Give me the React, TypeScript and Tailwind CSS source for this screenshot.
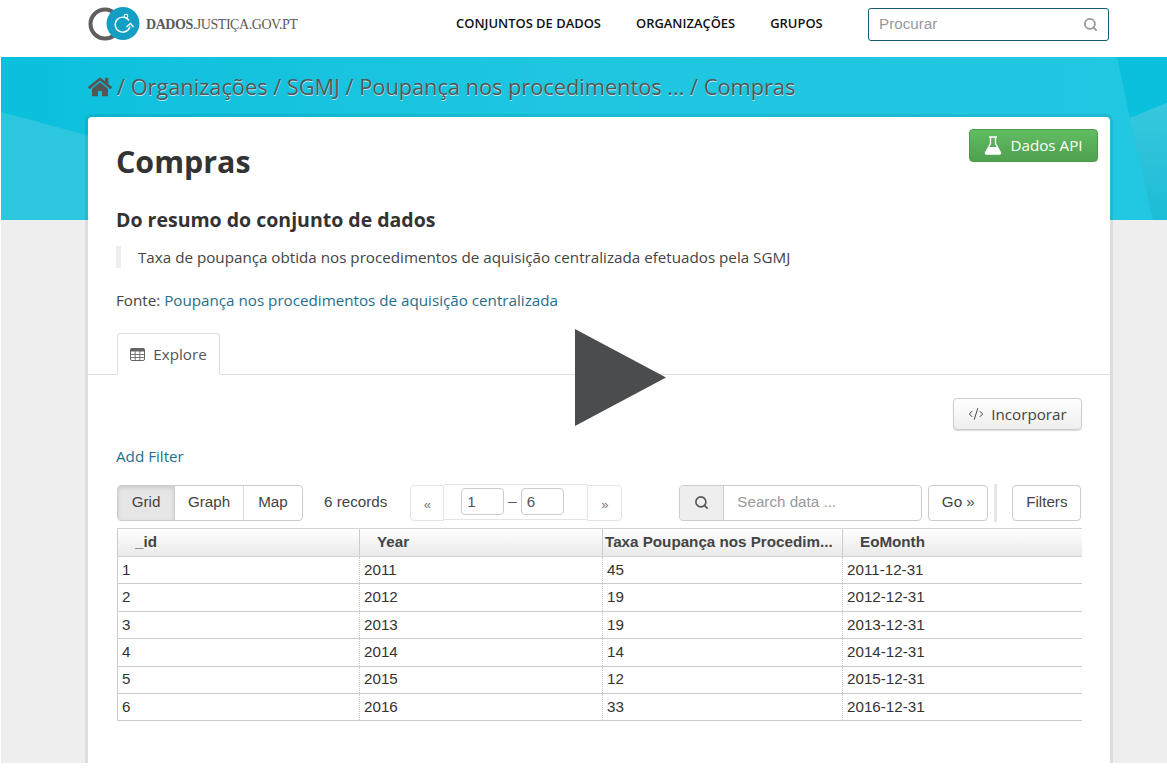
import { Search, CodeXml } from 'lucide-react';
import { FaHome } from 'react-icons/fa';

const rows = [
  ['1', '2011', '45', '2011-12-31'],
  ['2', '2012', '19', '2012-12-31'],
  ['3', '2013', '19', '2013-12-31'],
  ['4', '2014', '14', '2014-12-31'],
  ['5', '2015', '12', '2015-12-31'],
  ['6', '2016', '33', '2016-12-31'],
];

const openSans = "font-['Open_Sans',sans-serif]";
const helvetica = "font-['Liberation_Sans',sans-serif]";

function Logo() {
  return (
    <svg width="52" height="34" viewBox="0 0 52 34">
      <circle cx="17" cy="17" r="14.5" fill="none" stroke="#5f5f5f" strokeWidth="4" />
      <circle cx="35" cy="16.5" r="16.5" fill="#139fc4" />
      <path d="M41 13.5a7.5 7.5 0 1 0 1 6" fill="none" stroke="#fff" strokeWidth="1.4" />
      <circle cx="38" cy="9" r="1.8" fill="none" stroke="#fff" strokeWidth="1.1" />
      <path d="M38.5 20l4-3.5 3 3.5" fill="none" stroke="#fff" strokeWidth="1.4" />
    </svg>
  );
}

function Flask() {
  return (
    <svg width="18" height="19" viewBox="0 0 18 19">
      <path d="M5 1h8M6.5 1v6.500L1.500 16.500a1 1 0 0 0 1 1.500h13a1 1 0 0 0 1-1.500l-5-9V1" fill="none" stroke="#fff" strokeWidth="1.3" />
      <path d="M4.800 11h8.400l3.300 5.800a.8.8 0 0 1-.7 1.200H2.200a.8.8 0 0 1-.7-1.200z" fill="#fff" />
    </svg>
  );
}

function GridIcon() {
  return (
    <svg width="15" height="13" viewBox="0 0 15 13">
      <rect x="0.5" y="0.5" width="14" height="12" rx="1.5" fill="none" stroke="#666" />
      <rect x="0.5" y="0.5" width="14" height="3" fill="#666" />
      <path d="M5.200 3v9.500M9.800 3v9.500M1 6.500h13M1 9.500h13" stroke="#666" strokeWidth="0.9" />
    </svg>
  );
}

function Nav() {
  return (
    <header className="h-[57px] bg-white flex items-center pl-[88px]">
      <div className="flex items-center w-[368px] -mt-[9px]">
        <Logo />
        <span className="ml-[6px] text-[14px] tracking-[-0.45px] text-[#5a5a5a] font-['Liberation_Serif',serif]">
          <b>DADOS</b>.JUSTIÇA.GOV.PT
        </span>
      </div>
      <nav className={`flex gap-[35px] text-[12.95px] font-semibold text-[#111] -mt-[9px] w-[412px] ${openSans}`}>
        <span>CONJUNTOS DE DADOS</span>
        <span>ORGANIZAÇÕES</span>
        <span>GRUPOS</span>
      </nav>
      <div className="w-[241px] h-[33px] -mt-[9px] border border-[#1a5a72] rounded-[3px] flex items-center justify-between pl-[10px] pr-[10px]">
        <span className={`text-[15.2px] text-[#999] ${helvetica}`}>Procurar</span>
        <Search size={15} className="text-[#999]" strokeWidth={3} />
      </div>
    </header>
  );
}

function Banner() {
  return (
    <div className="relative h-[163px] overflow-hidden bg-gradient-to-r from-[#0ac0dd] via-[#1fc6e0] to-[#22c7e2] pl-[87px] pt-[14px]">
      <div className="absolute left-0 top-[55px] h-[110px] w-[90px] bg-[#2cc6df] [clip-path:polygon(0_0,100%_22%,100%_100%,0_100%)]" />
      <div className="absolute right-0 top-0 h-full w-[50px] bg-[#0ac0dd] [clip-path:polygon(0_0,100%_0,100%_46px,13px_61px)]" />
      <div className="absolute right-0 top-0 h-full w-[58px] bg-gradient-to-b from-[#3fcbe0] to-[#1bbcd6] [clip-path:polygon(21px_61px,100%_46px,100%_100%,44px_100%)]" />
      <div className={`relative flex items-center gap-[5px] text-[21.75px] text-[#555] [text-shadow:0_1px_0_rgba(255,255,255,0.7)] ${openSans}`}>
        <FaHome size={24} className="text-[#555]" />
        <span>/ Organizações / SGMJ / Poupança nos procedimentos ... / Compras</span>
      </div>
    </div>
  );
}

function Pager() {
  return (
    <div className="flex items-center ml-[23px] text-[#666]">
      <span className="w-[34px] h-[36px] mt-[1px] border border-[#e4e4e4] rounded-l-[4px] flex items-center justify-center text-[13px] text-[#777] pt-[4px]">«</span>
      <div className="h-[36px] -mt-[2px] w-[143px] border-y border-[#e4e4e4] flex items-center pl-[17px]">
        <span className="w-[43px] h-[27px] border border-[#ccc] rounded-[4px] pl-[5px] leading-[25px] text-[#555]">1</span>
        <span className="mx-[4px] text-[#555]">–</span>
        <span className="w-[43px] h-[27px] border border-[#ccc] rounded-[4px] pl-[5px] leading-[25px] text-[#555]">6</span>
      </div>
      <span className="w-[35px] h-[36px] mt-[1px] border border-[#e4e4e4] rounded-r-[4px] flex items-center justify-center text-[13px] text-[#777] pt-[4px]">»</span>
    </div>
  );
}

function Toolbar() {
  return (
    <div className={`flex items-center h-[37px] whitespace-nowrap text-[15.2px] text-[#444] ${helvetica}`}>
      <div className="flex h-[36px] border border-[#ccc] rounded-[4px] overflow-hidden">
        <span className="w-[57px] flex items-center justify-center bg-[#e6e6e6] shadow-[inset_0_2px_4px_rgba(0,0,0,0.12)] border-r border-[#ccc]">Grid</span>
        <span className="w-[69px] flex items-center justify-center border-r border-[#ddd]">Graph</span>
        <span className="w-[58px] flex items-center justify-center">Map</span>
      </div>
      <span className="ml-[21px]">6 records</span>
      <Pager />
      <div className="ml-[57px] flex h-[36px] w-[243px] border border-[#ccc] rounded-[4px] overflow-hidden">
        <span className="w-[44px] bg-[#eee] border-r border-[#ccc] flex items-center justify-center">
          <Search size={15} strokeWidth={2.6} className="text-[#555]" />
        </span>
        <span className="pl-[13px] flex items-center text-[#999]">Search data ...</span>
      </div>
      <span className="ml-[6px] w-[60px] h-[36px] border border-[#ccc] rounded-[4px] flex items-center justify-center">Go »</span>
      <span className="ml-[6px] w-[3px] h-[38px] bg-[#e6e6e6]" />
      <span className="ml-[15px] w-[69px] h-[36px] border border-[#ccc] rounded-[4px] flex items-center justify-center">Filters</span>
    </div>
  );
}

function DataGrid() {
  const cols = 'grid grid-cols-[242px_243px_240px_240px]';
  return (
    <div className={`mt-[7px] w-[965px] text-[15.2px] text-[#333] border-l border-[#ccc] ${helvetica}`}>
      <div className={`${cols} h-[29px] items-center font-bold text-[#444] border-y border-[#d4d4d4] bg-gradient-to-b from-white to-[#e9e9e9]`}>
        <span className="pl-[17px] h-full flex items-center border-r border-[#ccc]">_id</span>
        <span className="pl-[17px] h-full flex items-center border-r border-[#ccc]">Year</span>
        <span className="pl-[2px] h-full flex items-center border-r border-[#ccc] whitespace-nowrap overflow-hidden">Taxa Poupança nos Procedim...</span>
        <span className="pl-[17px] h-full flex items-center">EoMonth</span>
      </div>
      {rows.map((row) => (
        <div key={row[0]} className={`${cols} h-[27.4px] items-center border-b border-[#ccc]`}>
          {row.map((cell, i) => (
            <span key={i} className={`pl-[4px] h-full flex items-center ${i < 3 ? 'border-r border-dotted border-[#ccc]' : ''}`}>
              {cell}
            </span>
          ))}
        </div>
      ))}
    </div>
  );
}

function Card() {
  return (
    <section className={`relative z-10 -mt-[103px] ml-[88px] w-[1022px] h-[646px] bg-white rounded-t-[4px] shadow-[0_0_0_3px_rgba(0,0,0,0.07)] ${openSans}`}>
      <div className="px-[28px] pt-[25px]">
        <div className="flex justify-between items-start">
          <h1 className="text-[30.4px] leading-[40px] font-bold text-[#333]">Compras</h1>
          <button className="-mt-[13px] -mr-[16px] w-[129px] h-[33px] rounded-[4px] border border-[#4a9a4a] bg-gradient-to-b from-[#62bd62] to-[#4fa04f] text-white text-[15.2px] flex items-center justify-center gap-[8px]">
            <Flask />
            Dados API
          </button>
        </div>
        <h2 className="mt-[26px] text-[19.5px] leading-[24px] font-bold text-[#333]">Do resumo do conjunto de dados</h2>
        <p className="mt-[14px] border-l-[5px] border-[#eee] pl-[17px] text-[15.2px] leading-[22px] text-[#444]">
          Taxa de poupança obtida nos procedimentos de aquisição centralizada efetuados pela SGMJ
        </p>
        <p className="mt-[21px] text-[15.2px] leading-[22px] text-[#444]">
          Fonte: <span className="text-[#1f6f8b]">Poupança nos procedimentos de aquisição centralizada</span>
        </p>
      </div>
      <div className="mt-[22px] h-[42px] border-b border-[#ddd] pl-[29px]">
        <div className="w-[103px] h-[42px] border border-b-white border-[#ddd] rounded-t-[4px] bg-white flex items-center justify-center gap-[8px] text-[15.2px] text-[#555]">
          <GridIcon />
          Explore
        </div>
      </div>
      <div className="px-[28px]">
        <div className="flex justify-end mt-[23px]">
          <button className="w-[129px] h-[32px] border border-[#ccc] rounded-[4px] bg-gradient-to-b from-white to-[#eee] shadow-[0_1px_1px_rgba(0,0,0,0.15)] text-[15.2px] text-[#444] flex items-center justify-center gap-[7px]">
            <CodeXml size={16} strokeWidth={1.5} />
            Incorporar
          </button>
        </div>
        <p className="mt-[15px] text-[15.2px] leading-[22px] text-[#1f6f8b]">Add Filter</p>
        <div className="mt-[17px] ml-px">
          <Toolbar />
          <DataGrid />
        </div>
      </div>
    </section>
  );
}

export default function App() {
  return (
    <div className="relative w-[1167px] h-[776px] bg-white overflow-hidden">
      <Nav />
      <div className="h-[706px] pl-px bg-white overflow-hidden">
        <div className="h-full bg-[#eeeeee]">
          <Banner />
          <div className="-ml-px">
            <Card />
          </div>
        </div>
      </div>
      <svg className="absolute left-[575px] top-[329px] z-20" width="91" height="97" viewBox="0 0 91 97">
        <polygon points="0,0 91,48.5 0,97" fill="#4a4d4f" />
      </svg>
    </div>
  );
}
